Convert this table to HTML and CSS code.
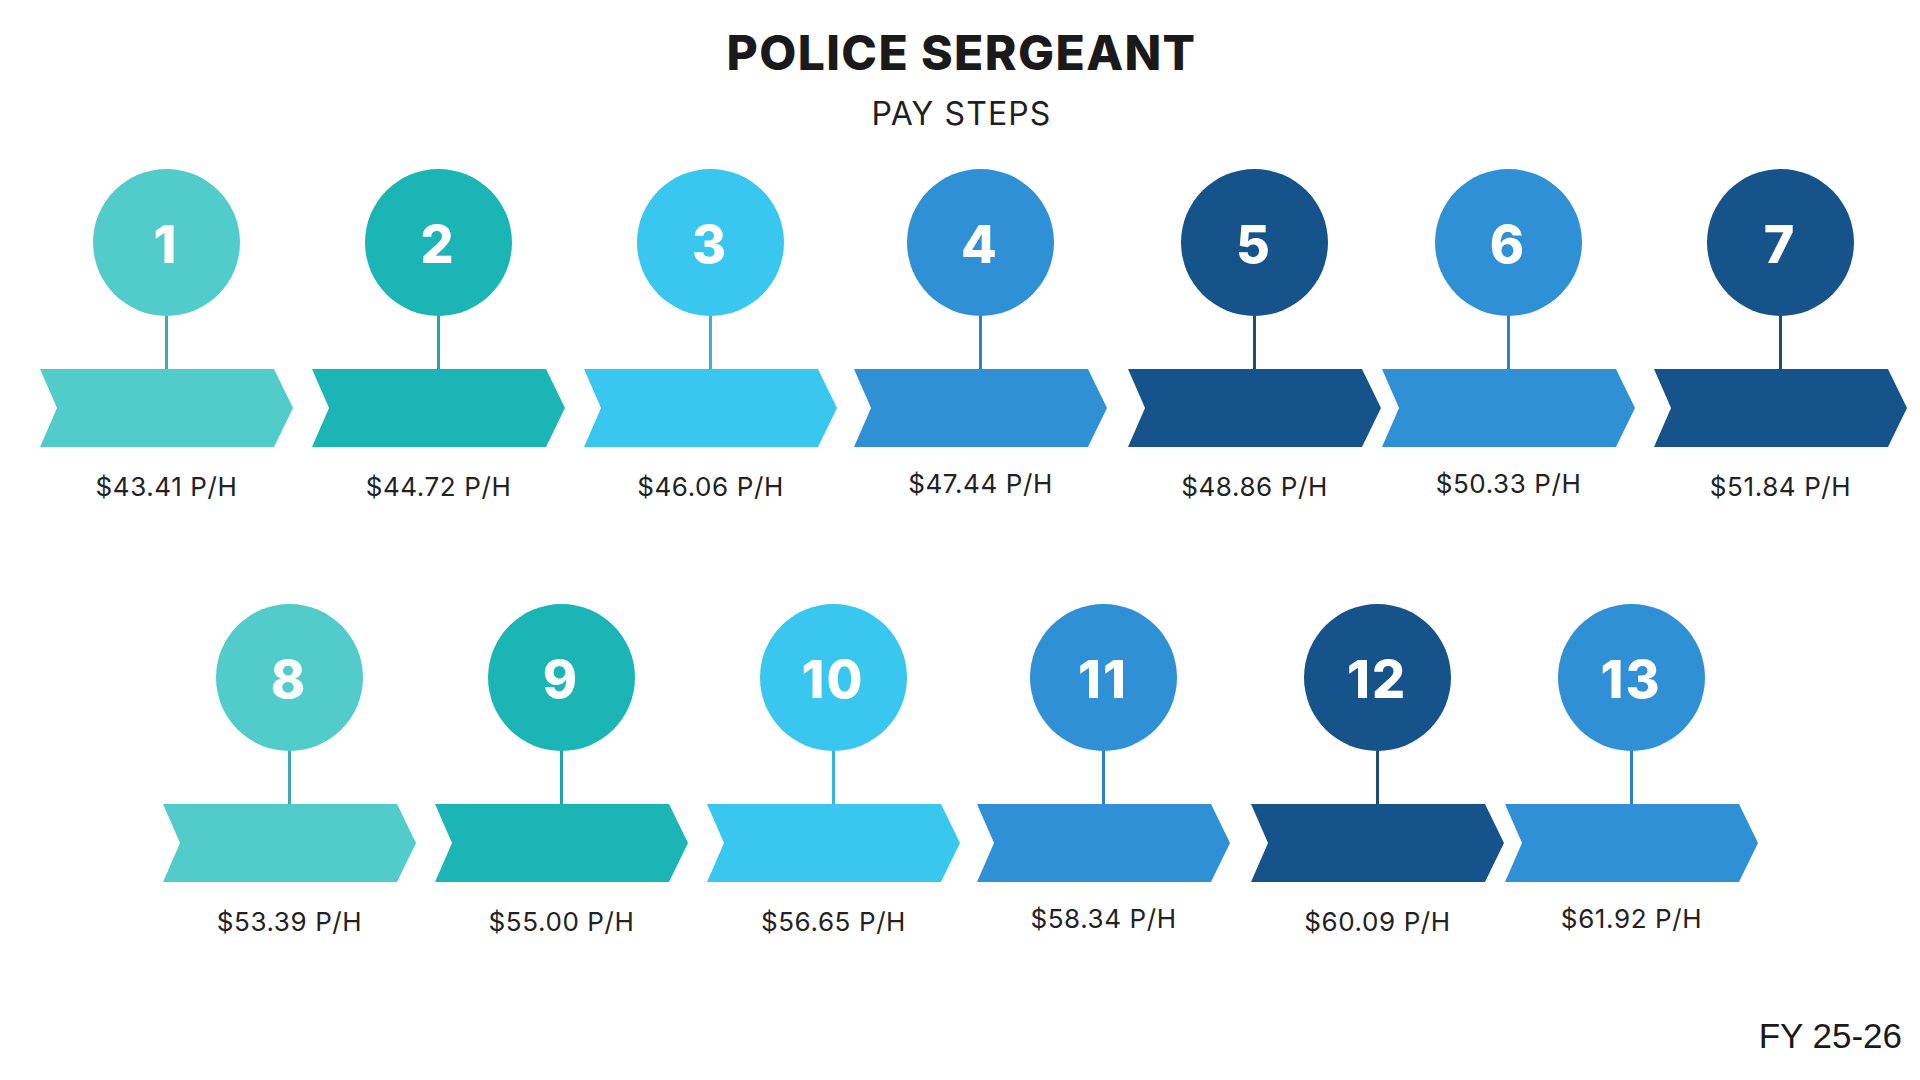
FILE: index.html
```html
<!DOCTYPE html>
<html lang="en">
<head>
<meta charset="utf-8">
<title>Police Sergeant – Pay Steps</title>
<link rel="stylesheet" href="styles.css">
</head>
<body>
<main class="page">
  <header class="head">
    <h1 class="title">POLICE SERGEANT</h1>
    <p class="subtitle">PAY STEPS</p>
  </header>

  <section class="row row-first">
    <div class="step c1"><div class="dot">1</div><div class="stem"></div><div class="chev"></div><div class="label">$43.41 P/H</div></div>
    <div class="step c2"><div class="dot">2</div><div class="stem"></div><div class="chev"></div><div class="label">$44.72 P/H</div></div>
    <div class="step c3"><div class="dot">3</div><div class="stem"></div><div class="chev"></div><div class="label">$46.06 P/H</div></div>
    <div class="step c4 shift-left"><div class="dot">4</div><div class="stem"></div><div class="chev"></div><div class="label">$47.44 P/H</div></div>
    <div class="step c5"><div class="dot">5</div><div class="stem"></div><div class="chev"></div><div class="label">$48.86 P/H</div></div>
    <div class="step c4 tight"><div class="dot">6</div><div class="stem"></div><div class="chev"></div><div class="label">$50.33 P/H</div></div>
    <div class="step c5"><div class="dot">7</div><div class="stem"></div><div class="chev"></div><div class="label">$51.84 P/H</div></div>
  </section>

  <section class="row row-second">
    <div class="step c1"><div class="dot">8</div><div class="stem"></div><div class="chev"></div><div class="label">$53.39 P/H</div></div>
    <div class="step c2"><div class="dot">9</div><div class="stem"></div><div class="chev"></div><div class="label">$55.00 P/H</div></div>
    <div class="step c3"><div class="dot">10</div><div class="stem"></div><div class="chev"></div><div class="label">$56.65 P/H</div></div>
    <div class="step c4 shift-left"><div class="dot">11</div><div class="stem"></div><div class="chev"></div><div class="label">$58.34 P/H</div></div>
    <div class="step c5"><div class="dot">12</div><div class="stem"></div><div class="chev"></div><div class="label">$60.09 P/H</div></div>
    <div class="step c4 tight"><div class="dot">13</div><div class="stem"></div><div class="chev"></div><div class="label">$61.92 P/H</div></div>
  </section>

  <footer class="fy">FY 25-26</footer>
</main>
</body>
</html>
```

FILE: styles.css
```css
* { box-sizing: border-box; }

html, body {
  margin: 0;
  padding: 0;
  background: #ffffff;
}

body {
  width: 1920px;
  height: 1080px;
  overflow: hidden;
  font-family: "Inter", "Liberation Sans", sans-serif;
  color: #1c1c1c;
}

.page {
  display: flex;
  flex-direction: column;
  height: 1080px;
}

/* ---------- header ---------- */
.head {
  display: flex;
  flex-direction: column;
  align-items: center;
  padding-top: 25px;
  padding-left: 3px;
}

.title {
  margin: 0;
  font-size: 48px;
  line-height: 56px;
  font-weight: 800;
  letter-spacing: 1.4px;
  color: #1a1a1a;
}

.subtitle {
  margin: 13px 0 0;
  font-size: 32px;
  line-height: 40px;
  font-weight: 400;
  letter-spacing: 1.1px;
  color: #1f1f1f;
}

/* ---------- rows ---------- */
.row {
  display: flex;
  gap: 19px;
}

.row-first {
  margin-top: 35px;
  padding-left: 40px;
}

.row-second {
  margin-top: 101px;
  padding-left: 163px;
}

.step {
  width: 253px;
  display: flex;
  flex-direction: column;
  align-items: center;
}

.step.shift-left {
  margin-left: -2px;
  margin-right: 2px;
}

.step.tight {
  margin-left: -18px;
}

.c1 { --fill: #52cccb; --stem: #3eaab5; }
.c2 { --fill: #1ab5b4; --stem: #23a3ad; }
.c3 { --fill: #3ac7ef; --stem: #36b3de; }
.c4 { --fill: #2f90d5; --stem: #2c82c4; }
.c5 { --fill: #16538a; --stem: #1f4c7a; }

.dot {
  width: 147px;
  height: 147px;
  border-radius: 50%;
  background: var(--fill);
  color: #ffffff;
  display: flex;
  align-items: center;
  justify-content: center;
  font-size: 52px;
  font-weight: 800;
  letter-spacing: 2px;
  padding-top: 3px;
  margin-left: -1px;
}

.stem {
  width: 3px;
  height: 53px;
  background: var(--stem);
  margin-left: -1px;
}

.chev {
  align-self: stretch;
  height: 78px;
  background: var(--fill);
  clip-path: polygon(0 0, calc(100% - 19px) 0, 100% 50%, calc(100% - 19px) 100%, 0 100%, 17px 50%);
}

.label {
  margin-top: 24px;
  font-size: 26px;
  line-height: 32px;
  letter-spacing: 0.6px;
  color: #222222;
  white-space: nowrap;
}

.c4 .label {
  margin-top: 21px;
}

/* ---------- footer ---------- */
.fy {
  margin-top: auto;
  align-self: flex-end;
  padding: 0 18px 24px 0;
  font-family: "Liberation Sans", Arial, sans-serif;
  font-size: 35px;
  line-height: 40px;
  color: #1a1a1a;
}
```
